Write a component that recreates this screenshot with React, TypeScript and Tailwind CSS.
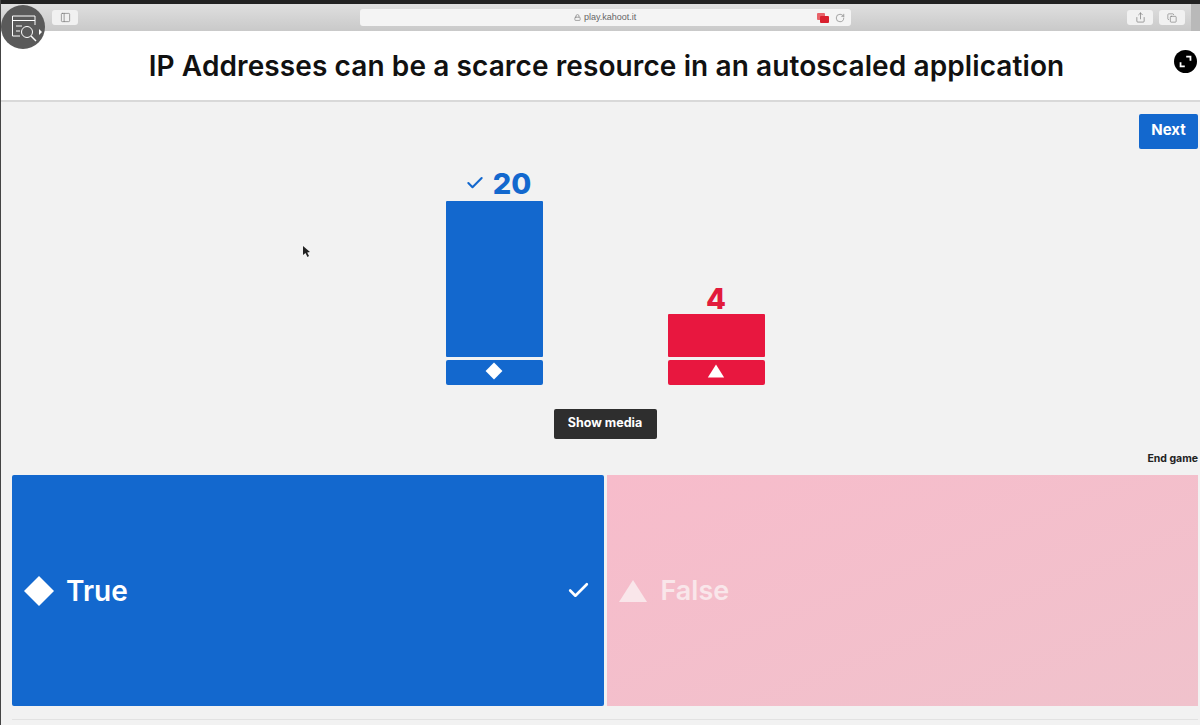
import { Check, RotateCw, Share, Copy, Lock, PanelLeft } from 'lucide-react'

const Diamond = ({ className }: { className: string }) => (
  <svg viewBox="0 0 32 32" className={className} fill="currentColor">
    <path d="M16 1 L31 16 L16 31 L1 16 Z" />
  </svg>
)

const Triangle = ({ className }: { className: string }) => (
  <svg viewBox="0 0 30 24" className={className} fill="currentColor">
    <path d="M15 1 L29 23 L1 23 Z" />
  </svg>
)

const ToolbarButton = ({ children, className }: { children: React.ReactNode; className: string }) => (
  <div className={`flex h-[15px] items-center justify-center rounded-[3px] bg-[#f1f1f1] text-[#777] ${className}`}>
    {children}
  </div>
)

const BrowserBar = () => (
  <div className="flex h-[27px] items-center bg-gradient-to-b from-[#dfdfdf] to-[#c9c9c9] pl-[51px]">
    <ToolbarButton className="w-[26px]">
      <PanelLeft className="h-[11px] w-[11px]" strokeWidth={1.5} />
    </ToolbarButton>
    <div className="ml-[282px] flex h-[17px] w-[491px] items-center rounded-[3px] bg-[#f4f4f4] pl-[214px] pr-[6px]">
      <Lock className="h-[7px] w-[7px] text-[#888]" strokeWidth={2.5} />
      <span className="ml-[3px] font-['Liberation_Sans',sans-serif] text-[9px] text-[#666]">play.kahoot.it</span>
      <div className="ml-auto flex items-center gap-[6px]">
        <div className="relative h-[10px] w-[12px]">
          <div className="absolute left-0 top-0 h-[7px] w-[8px] rounded-[1px] bg-[#e8636a]" />
          <div className="absolute bottom-0 right-0 h-[7px] w-[9px] rounded-[1px] bg-[#d9202e]" />
        </div>
        <RotateCw className="h-[10px] w-[10px] text-[#777]" strokeWidth={1.5} />
      </div>
    </div>
    <ToolbarButton className="ml-[276px] w-[26px]">
      <Share className="h-[11px] w-[11px]" strokeWidth={1.5} />
    </ToolbarButton>
    <ToolbarButton className="ml-[6px] w-[26px]">
      <Copy className="h-[10px] w-[10px]" strokeWidth={1.5} />
    </ToolbarButton>
    <div className="ml-[6px] h-full flex-1 bg-[#b9b9b9]" />
  </div>
)

const CaptureBadge = () => (
  <div className="absolute left-0 top-[5px] z-10 flex h-[44px] w-[44px] items-center justify-center rounded-full bg-[#5a5a5a]">
    <svg viewBox="0 0 44 44" className="h-[44px] w-[44px]" fill="none" stroke="#fff" strokeWidth="1">
      <path d="M34 20 V11 H11.5 V31 H19" />
      <path d="M11.5 15.5 H34" />
      <path d="M15 21 H21 M15 26 H19" />
      <circle cx="26" cy="27" r="5.5" />
      <path d="M30 31 L35 36" strokeWidth="1.4" />
      <path d="M38 24 L41 27 L38 30 Z" fill="#fff" stroke="none" />
    </svg>
  </div>
)

interface BarProps {
  count: string
  height: string
  color: string
  textColor: string
  correct?: boolean
  icon: React.ReactNode
}

const Bar = ({ count, height, color, textColor, correct, icon }: BarProps) => (
  <div className="flex w-[97px] flex-col items-center">
    <div className={`flex h-[32px] items-center font-['Inter',sans-serif] text-[29px] font-extrabold leading-none ${correct ? 'pb-[4px]' : ''} ${textColor}`}>
      {correct && <Check className="mr-[8px] ml-[8px] h-[20px] w-[20px]" strokeWidth={2.5} />}
      {count}
    </div>
    <div className={`w-full rounded-[1px] ${height} ${color}`} />
    <div className={`mt-[3px] flex h-[25px] w-full items-center justify-center rounded-[2px] pb-[3px] text-white ${color}`}>
      {icon}
    </div>
  </div>
)

export default function App() {
  return (
    <div className="relative h-[725px] w-[1200px] overflow-hidden border-l border-[#444] bg-[#f2f2f2] font-['Inter',sans-serif]">
      <div className="h-[4px] bg-[#222]" />
      <BrowserBar />
      <CaptureBadge />

      <header className="relative flex h-[71px] items-center justify-center border-b-2 border-[#d9d9d9] bg-white pl-[12px]">
        <h1 className="text-[28px] font-semibold leading-none tracking-[0.1px] text-[#111]">
          IP Addresses can be a scarce resource in an autoscaled application
        </h1>
        <div className="absolute right-[3px] top-[19px] flex h-[23px] w-[23px] items-center justify-center rounded-full bg-black">
          <svg viewBox="0 0 24 24" className="h-[17px] w-[17px]" fill="none" stroke="#fff" strokeWidth="2.5">
            <path d="M13 5 H19 V11 M11 19 H5 V13" />
          </svg>
        </div>
      </header>

      <main className="flex flex-col pl-[11px] pr-[2px] pt-[12px]">
        <div className="flex justify-end">
          <button className="h-[35px] w-[59px] rounded-[2px] bg-[#1368ce] pb-[2px] text-[15px] font-bold text-white">Next</button>
        </div>

        <div className="relative flex h-[236px] items-end justify-center gap-[125px]">
          <Bar
            count="20"
            height="h-[156px]"
            color="bg-[#1368ce]"
            textColor="text-[#1368ce]"
            correct
            icon={<Diamond className="h-[18px] w-[18px]" />}
          />
          <Bar
            count="4"
            height="h-[43px]"
            color="bg-[#e8173f]"
            textColor="text-[#e21b3c]"
            icon={<Triangle className="h-[14px] w-[18px]" />}
          />
          <svg viewBox="0 0 10 12" className="absolute left-[290px] top-[97px] h-[12px] w-[10px]" fill="#222">
            <path d="M1 0 L1 9 L3.5 7 L5.5 11 L7 10 L5.2 6.5 L8 6 Z" />
          </svg>
        </div>

        <div className="mt-[24px] flex justify-center">
          <button className="h-[30px] w-[103px] rounded-[2px] bg-[#2e2e2e] pb-[2px] text-[12.5px] font-bold text-white">Show media</button>
        </div>

        <div className="mt-[13px] flex h-[13px] items-center justify-end">
          <span className="text-[10.5px] font-bold text-[#222]">End game</span>
        </div>

        <div className="mt-[10px] grid h-[231px] grid-cols-2 gap-[3px]">
          <div className="flex items-center rounded-[2px] bg-[#1368ce] pl-[11px] pr-[13px] text-white">
            <Diamond className="h-[32px] w-[32px]" />
            <span className="ml-[11px] text-[28px] font-semibold">True</span>
            <Check className="ml-auto h-[25px] w-[25px]" strokeWidth={2.5} />
          </div>
          <div className="flex items-center bg-gradient-to-br from-[#f7bccb] to-[#f0c2cc] pl-[11px] text-[#f9e6ea]">
            <Triangle className="h-[24px] w-[30px]" />
            <span className="ml-[13px] pt-[2px] text-[27px] font-semibold">False</span>
          </div>
        </div>

        <div className="mt-[13px] h-[1px] w-full bg-[#e2e2e2]" />
      </main>
    </div>
  )
}
